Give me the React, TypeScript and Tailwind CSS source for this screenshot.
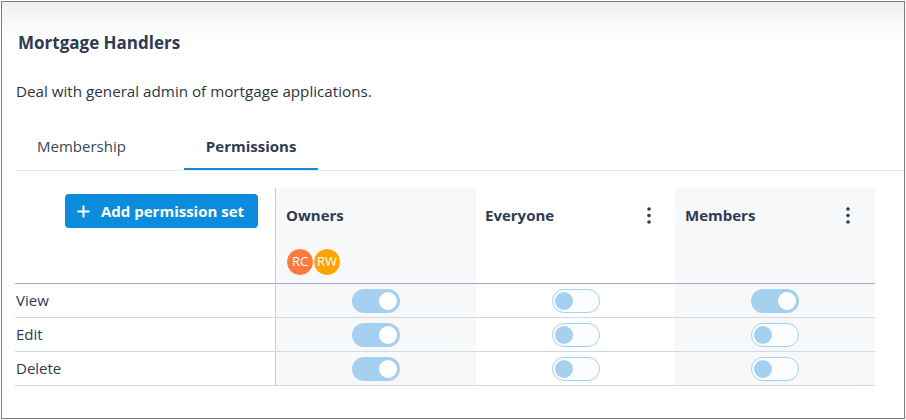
import React from 'react';

const font = { fontFamily: '"Open Sans", "Noto Sans", sans-serif' };

const Toggle = ({ on }: { on: boolean }) =>
  on ? (
    <div className="flex h-[24px] w-[48px] items-center justify-end rounded-full bg-[#a6d0f0] pr-[3px]">
      <div className="h-[18px] w-[18px] rounded-full bg-white" />
    </div>
  ) : (
    <div className="flex h-[24px] w-[48px] items-center rounded-full border border-[#a6d0f0] bg-[#fcfdfe] pl-[2px]">
      <div className="h-[18px] w-[18px] rounded-full bg-[#a6d0f0]" />
    </div>
  );

const Kebab = () => (
  <svg width="4" height="17" viewBox="0 0 4 17" className="mt-[2px]">
    <circle cx="2" cy="2" r="1.8" fill="#2e3b52" />
    <circle cx="2" cy="8.5" r="1.8" fill="#2e3b52" />
    <circle cx="2" cy="15" r="1.8" fill="#2e3b52" />
  </svg>
);

const rows = [
  { label: 'View', values: [true, false, true] },
  { label: 'Edit', values: [true, false, false] },
  { label: 'Delete', values: [true, false, false] },
];

const colBg = ['bg-[#f7f8fa]', 'bg-white', 'bg-[#f7f8fa]'];

export default function App() {
  return (
    <div className="h-[420px] w-[906px] bg-white pl-px pt-px" style={font}>
      <div className="h-[418px] w-[904px] border border-[#7d7d7d] bg-[linear-gradient(to_bottom,#eceeef_0px,#f7f8f8_18px,#ffffff_42px)] pl-[13px] text-[#2e3b52]">
        <h1 className="ml-[3px] mt-[30px] text-[17px] font-bold leading-[22px]">Mortgage Handlers</h1>
        <p className="ml-px mt-[27px] text-[15.2px] leading-[20px] text-[#2b3442]">
          Deal with general admin of mortgage applications.
        </p>

        <div className="mt-[21px] flex h-[49px] border-b border-[#e6e8eb]">
          <div className="flex h-[48px] items-center px-[22px] text-[15px] text-[#3a4657]">Membership</div>
          <div className="ml-[36px] flex h-[48px] items-center border-b-2 border-[#1a87d6] px-[22px] pt-[2px] text-[15px] font-bold text-[#2e3b52]">
            Permissions
          </div>
        </div>

        <div className="mt-[17px] grid w-[860px] grid-cols-[261px_200px_199px_200px] text-[15px]">
          {/* header */}
          <div className="flex h-[96px] justify-end border-b border-r border-b-[#a3a9c6] border-r-[#c7cde2] pr-[17px] pt-[6px]">
            <button className="flex h-[34px] w-[193px] items-center gap-[11px] rounded-[4px] bg-[#0b8cdc] pl-[12px] text-[15px] font-bold text-white">
              <svg width="13" height="13" viewBox="0 0 13 13">
                <path d="M6.5 0.5v12M0.5 6.5h12" stroke="white" strokeWidth="2" />
              </svg>
              Add permission set
            </button>
          </div>
          <div className="h-[96px] border-b border-[#a3a9c6] bg-[#f7f8fa] pl-[10px] pt-[17px]">
            <div className="font-bold leading-[20px]">Owners</div>
            <div className="mt-[23px] flex">
              <div className="flex h-[28px] w-[28px] items-center justify-center rounded-full border border-white bg-[#fd7a3f] text-[13px] text-white">
                RC
              </div>
              <div className="-ml-px flex h-[28px] w-[28px] items-center justify-center rounded-full border border-white bg-[#ffa300] text-[13px] text-white">
                RW
              </div>
            </div>
          </div>
          <div className="flex h-[96px] items-start justify-between border-b border-[#a3a9c6] bg-white pl-[9px] pr-[24px] pt-[17px]">
            <div className="font-bold leading-[20px]">Everyone</div>
            <Kebab />
          </div>
          <div className="flex h-[96px] items-start justify-between border-b border-[#a3a9c6] bg-[#f7f8fa] pl-[10px] pr-[25px] pt-[17px]">
            <div className="font-bold leading-[20px]">Members</div>
            <Kebab />
          </div>

          {rows.map((row) => (
            <React.Fragment key={row.label}>
              <div className="flex h-[34px] items-center border-b border-r border-b-[#d3d8e8] border-r-[#c7cde2] pl-px text-[#2e3b52]">
                {row.label}
              </div>
              {row.values.map((v, i) => (
                <div key={i} className={`flex h-[34px] items-center justify-center border-b border-[#d3d8e8] ${colBg[i]}`}>
                  <Toggle on={v} />
                </div>
              ))}
            </React.Fragment>
          ))}
        </div>
      </div>
    </div>
  );
}
